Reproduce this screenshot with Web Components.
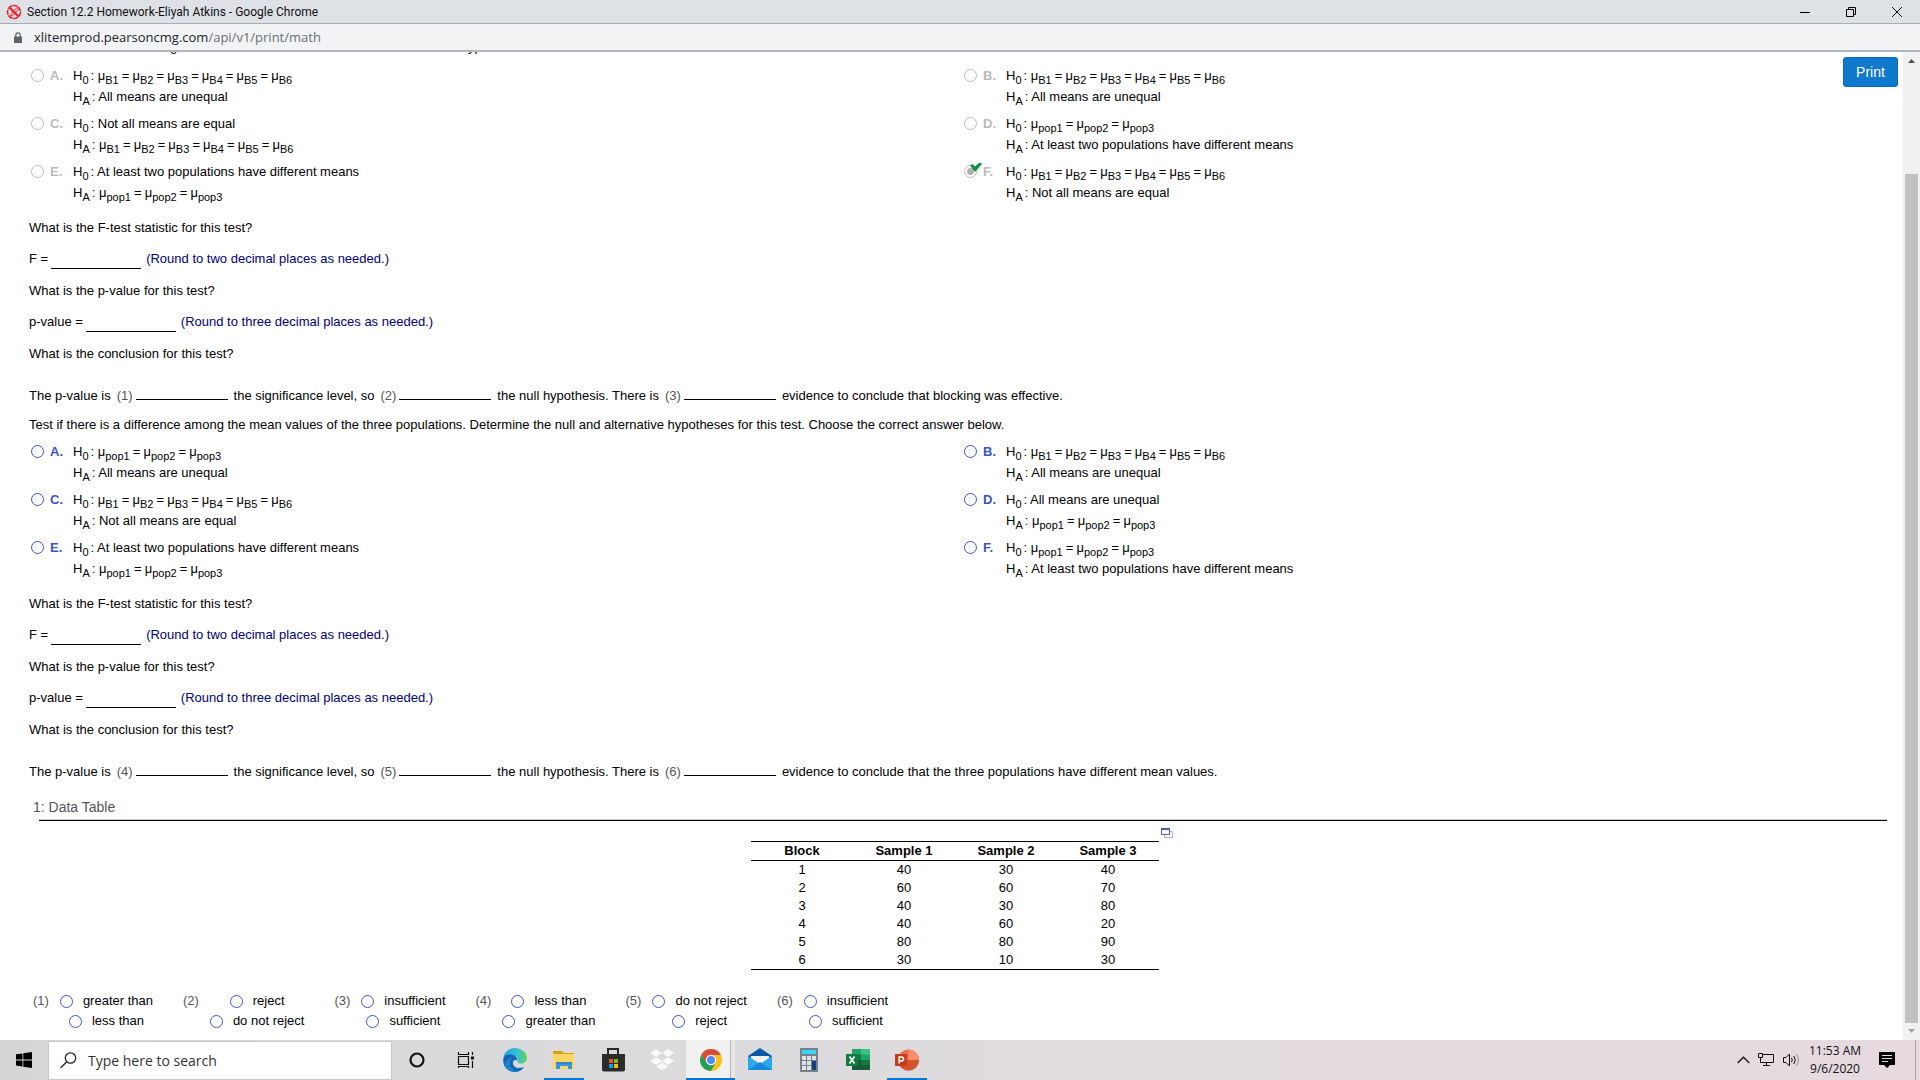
<!DOCTYPE html>
<html lang="en">
<head>
<meta charset="utf-8">
<title>Section 12.2 Homework</title>
<style>
  html, body { height: 100%; }
  body { margin: 0; overflow: hidden; background: #fff; }
</style>
</head>
<body>
<desktop-screen>
  <window-title slot="top">Section 12.2 Homework-Eliyah Atkins - Google Chrome</window-title>
  <address-bar slot="top" host="xlitemprod.pearsoncmg.com" path="/api/v1/print/math"></address-bar>

  <page-view slot="page">
    <hypothesis-test lead>
      <span slot="prompt">Test to see if this blocking was effective. Determine the null and alternative hypotheses for this test. Choose the correct answer below.</span>
      <answer-choice letter="A" locked><mean-chain slot="null" of="B1 B2 B3 B4 B5 B6"></mean-chain><span slot="alt">All means are unequal</span></answer-choice>
      <answer-choice letter="B" locked><mean-chain slot="null" of="B1 B2 B3 B4 B5 B6"></mean-chain><span slot="alt">All means are unequal</span></answer-choice>
      <answer-choice letter="C" locked><span slot="null">Not all means are equal</span><mean-chain slot="alt" of="B1 B2 B3 B4 B5 B6"></mean-chain></answer-choice>
      <answer-choice letter="D" locked><mean-chain slot="null" of="pop1 pop2 pop3"></mean-chain><span slot="alt">At least two populations have different means</span></answer-choice>
      <answer-choice letter="E" locked><span slot="null">At least two populations have different means</span><mean-chain slot="alt" of="pop1 pop2 pop3"></mean-chain></answer-choice>
      <answer-choice letter="F" locked correct><mean-chain slot="null" of="B1 B2 B3 B4 B5 B6"></mean-chain><span slot="alt">Not all means are equal</span></answer-choice>
      <conclusion-line slot="conclusion" first="1">evidence to conclude that blocking was effective.</conclusion-line>
    </hypothesis-test>

    <hypothesis-test>
      <span slot="prompt">Test if there is a difference among the mean values of the three populations. Determine the null and alternative hypotheses for this test. Choose the correct answer below.</span>
      <answer-choice letter="A"><mean-chain slot="null" of="pop1 pop2 pop3"></mean-chain><span slot="alt">All means are unequal</span></answer-choice>
      <answer-choice letter="B"><mean-chain slot="null" of="B1 B2 B3 B4 B5 B6"></mean-chain><span slot="alt">All means are unequal</span></answer-choice>
      <answer-choice letter="C"><mean-chain slot="null" of="B1 B2 B3 B4 B5 B6"></mean-chain><span slot="alt">Not all means are equal</span></answer-choice>
      <answer-choice letter="D"><span slot="null">All means are unequal</span><mean-chain slot="alt" of="pop1 pop2 pop3"></mean-chain></answer-choice>
      <answer-choice letter="E"><span slot="null">At least two populations have different means</span><mean-chain slot="alt" of="pop1 pop2 pop3"></mean-chain></answer-choice>
      <answer-choice letter="F"><mean-chain slot="null" of="pop1 pop2 pop3"></mean-chain><span slot="alt">At least two populations have different means</span></answer-choice>
      <conclusion-line slot="conclusion" first="4">evidence to conclude that the three populations have different mean values.</conclusion-line>
    </hypothesis-test>

    <data-table heading="1: Data Table"></data-table>

    <option-lists>
      <option-list number="1" options="greater than|less than"></option-list>
      <option-list number="2" options="reject|do not reject"></option-list>
      <option-list number="3" options="insufficient|sufficient"></option-list>
      <option-list number="4" options="less than|greater than"></option-list>
      <option-list number="5" options="do not reject|reject"></option-list>
      <option-list number="6" options="insufficient|sufficient"></option-list>
    </option-lists>
  </page-view>

  <task-bar slot="bottom"></task-bar>
</desktop-screen>

<script>
const radioStyle = `
  input[type=radio] {
    appearance: none; box-sizing: border-box; flex: none;
    width: 13px; height: 13px; margin: 0;
    border: 1px solid #3b55c8; border-radius: 50%; background: #fff;
  }`;

function define(name, render) {
  customElements.define(name, class extends HTMLElement {
    constructor() {
      super();
      this.attachShadow({ mode: 'open' });
    }
    connectedCallback() {
      this.shadowRoot.innerHTML = render(this);
    }
  });
}

define('desktop-screen', () => `
  <style>
    :host { display: flex; flex-direction: column; height: 100vh; overflow: hidden; }
    main { flex: 1; min-height: 0; display: flex; }
    main ::slotted(*) { flex: 1; }
  </style>
  <slot name="top"></slot>
  <main><slot name="page"></slot></main>
  <slot name="bottom"></slot>`);

define('window-title', () => `
  <style>
    :host { display: flex; align-items: center; height: 23px; padding-left: 6px; background: #dee1e6;
      border-bottom: 1px solid #a9abaf; font: 12px/16px Roboto, "Noto Sans", sans-serif; color: #111; }
    .icon { flex: none; margin-right: 5px; }
    span { flex: 1; }
    button { width: 46px; height: 23px; padding: 0; border: 0; background: none; display: flex; align-items: center; justify-content: center; }
  </style>
  <svg class="icon" width="16" height="16" viewBox="0 0 16 16" fill="none">
    <circle cx="8" cy="8" r="6.5" stroke="#e8222a" stroke-width="1.6" stroke-dasharray="5 .7"/>
    <path d="M4 12.500 5.500 9.500 11 3.500 13 5 7.500 11z" fill="#f7b9b9" stroke="#e8222a" stroke-width=".8"/>
    <path d="M3.500 3.500 12.500 12.500" stroke="#e8222a" stroke-width="2.200"/>
  </svg>
  <span><slot></slot></span>
  <button aria-label="Minimize"><svg width="10" height="10"><path d="M0 5.500H10" stroke="#000"/></svg></button>
  <button aria-label="Restore"><svg width="10" height="10" fill="none" stroke="#000"><path d="M.5 2.500h7v7h-7zM2.500 2.500v-2h7v7h-2"/></svg></button>
  <button aria-label="Close"><svg width="10" height="10" stroke="#111"><path d="M0 0 10 10M10 0 0 10"/></svg></button>`);

define('address-bar', el => `
  <style>
    :host { display: flex; align-items: center; height: 26px; padding-left: 14px; background: #f1f3f4;
      border-bottom: 2px solid #b4b6b9; font: 13px/20px "Open Sans", "Noto Sans", sans-serif; color: #6c7074; }
    svg { margin-right: 12px; }
    b { font-weight: normal; color: #222529; }
  </style>
  <svg width="8" height="11" viewBox="0 0 8 11"><path d="M0 4.500h8V11H0z" fill="#5f6368"/><path d="M1.800 5V3a2.200 2.200 0 0 1 4.400 0v2" fill="none" stroke="#5f6368" stroke-width="1.200"/></svg>
  <div><b>${el.getAttribute('host')}</b>${el.getAttribute('path')}</div>`);

define('page-view', () => `
  <style>
    :host { display: flex; min-width: 0; background: #fff; position: relative; overflow: hidden;
      font: 13px/16px "Liberation Sans", Arial, sans-serif; color: #000; }
    article { flex: 1; min-width: 0; margin-top: -13px; padding: 0 8px 0 29px; display: flex; flex-direction: column; gap: 13px; }
    .print { position: absolute; top: 5px; right: 22px; width: 55px; height: 30px; padding: 0;
      border: 1px solid #0c67ae; border-radius: 3px; background: #0f79cd; color: #fff;
      font: 14px/20px "Liberation Sans", Arial, sans-serif; }
  </style>
  <article><slot></slot></article>
  <button class="print">Print</button>
  <scroll-rail></scroll-rail>`);

define('scroll-rail', () => `
  <style>
    :host { flex: none; width: 17px; background: #f1f1f1; display: flex; flex-direction: column; }
    svg { flex: none; display: block; }
    .above { flex: 105; }
    .thumb { flex: 849; margin: 0 2px; background: #c1c1c1; }
  </style>
  <svg width="17" height="17"><path d="M5 11h7L8.500 7z" fill="#505050"/></svg>
  <div class="above"></div><div class="thumb"></div>
  <svg width="17" height="17"><path d="M5 6h7L8.500 10z" fill="#a3a3a3"/></svg>`);

define('hypothesis-test', () => `
  <style>
    :host { display: block; }
    p { margin: 0; white-space: nowrap; }
    .choices { display: grid; grid-template-columns: 1fr 1fr; grid-auto-rows: 48px; margin: 8px 0 11px; }
    :host([lead]) .choices { margin-top: 10px; }
    .questions { display: grid; gap: 16px; margin-bottom: 26px; }
    .qa { display: grid; gap: 15px; }
  </style>
  <p><slot name="prompt"></slot></p>
  <div class="choices"><slot></slot></div>
  <div class="questions">
    <div class="qa"><p>What is the F-test statistic for this test?</p><number-blank label="F =" places="two"></number-blank></div>
    <div class="qa"><p>What is the p-value for this test?</p><number-blank label="p-value =" places="three"></number-blank></div>
    <p>What is the conclusion for this test?</p>
  </div>
  <slot name="conclusion"></slot>`);

define('answer-choice', el => {
  const letter = el.getAttribute('letter');
  const correct = el.hasAttribute('correct');
  return `
  <style>
    ${radioStyle}
    :host { display: flex; align-items: flex-start; padding-left: 2px; --ink: #3b55c8; line-height: 21px; }
    :host([locked]) { --ink: #bababa; }
    label { display: flex; align-items: center; width: 42px; color: var(--ink); gap: 6px; position: relative; }
    input[type=radio] { border-color: var(--ink); }
    input[type=radio]:checked { background: radial-gradient(circle, #b0b0b0 0 3px, #fff 4px); }
    .tick { position: absolute; left: 6px; top: 2px; }
    .line { white-space: nowrap; height: 21px; }
    sub { font-size: 11px; line-height: 0; vertical-align: -4px; }
    i { font-style: normal; margin-right: 2px; }
  </style>
  <label><input type="radio" name="choice" ${el.hasAttribute('locked') ? 'disabled' : ''} ${correct ? 'checked' : ''}><b>${letter}.</b>
    ${correct ? '<svg class="tick" width="12" height="9" viewBox="0 0 12 9"><path d="M0 2.500 2.500 1 5 3.500 9 0H11.500V1.500L5 9z" fill="#0a9440"/></svg>' : ''}
  </label>
  <div>
    <div class="line">H<sub>0</sub><i></i>: <slot name="null"></slot></div>
    <div class="line">H<sub>A</sub><i></i>: <slot name="alt"></slot></div>
  </div>`;
});

define('mean-chain', el => `
  <style>
    :host { display: inline; }
    sub { font-size: 11px; line-height: 0; vertical-align: -4px; }
    small { font-size: 11px; line-height: 0; }
  </style>${el.getAttribute('of').split(' ').map(t => `μ<sub>${t}</sub>`).join('<small> </small>=<small> </small>')}`);

define('number-blank', el => `
  <style>
    :host { display: block; }
    label { display: flex; height: 16px; white-space: pre; }
    input { flex: none; box-sizing: border-box; width: 90px; height: 18px; margin: 0 5px 0 3px; padding: 0; border: 0; border-bottom: 1px solid #000; background: none; font: inherit; }
    em { font-style: normal; color: #00007c; }
  </style>
  <label><span>${el.getAttribute('label')}</span><input type="text"><em>(Round to ${el.getAttribute('places')} decimal places as needed.)</em></label>`);

define('conclusion-line', el => {
  const n = Number(el.getAttribute('first'));
  const blank = k => `<label><span>(${k})</span><input type="text"></label>`;
  return `
  <style>
    :host { display: flex; height: 16px; white-space: nowrap; }
    label { display: flex; gap: 3px; margin: 0 6px 0 6px; color: #555; }
    input { flex: none; box-sizing: border-box; width: 92px; height: 12px; margin: 0; padding: 0; border: 0; border-bottom: 1px solid #000; background: none; font: inherit; }
  </style>
  <span>The p-value is</span>${blank(n)}<span>the significance level, so</span>${blank(n + 1)}<span>the null hypothesis. There is</span>${blank(n + 2)}<span><slot></slot></span>`;
});

define('data-table', el => {
  const rows = [[1, 40, 30, 40], [2, 60, 60, 70], [3, 40, 30, 80], [4, 40, 60, 20], [5, 80, 80, 90], [6, 30, 10, 30]];
  return `
  <style>
    :host { display: block; padding-top: 6px; }
    h2 { margin: 0 0 4px 4px; font-size: 14px; line-height: 16px; font-weight: normal; color: #555; }
    hr { margin: 0 8px 0 10px; border: 0; border-top: 1px solid #ccc; border-bottom: 1px solid #000; }
    .holder { display: flex; justify-content: center; align-items: flex-start; gap: 2px; padding: 7px 0 8px; }
    table { width: 408px; margin-top: 13px; table-layout: fixed; border-collapse: separate; border-spacing: 0;
      border-top: 1px solid #000; border-bottom: 1px solid #000; text-align: center; }
    th, td { padding: 0; height: 18px; line-height: 18px; }
    th { border-bottom: 1px solid #000; }
    button { border: 0; padding: 0; background: none; display: block; height: 10px; }
    svg { display: block; }
  </style>
  <h2>${el.getAttribute('heading')}</h2>
  <hr>
  <div class="holder">
    <table>
      <thead><tr><th>Block</th><th>Sample 1</th><th>Sample 2</th><th>Sample 3</th></tr></thead>
      <tbody>${rows.map(r => `<tr>${r.map(c => `<td>${c}</td>`).join('')}</tr>`).join('')}</tbody>
    </table>
    <button aria-label="Open table in a window"><svg width="12" height="10"><path d="M3.500 3.500h8v6h-8z" fill="#fff" stroke="#a9b2dc"/><path d="M.5 .5h8v6h-8z" fill="#fff" stroke="#4a5aa8"/><path d="M0 0h9v2H0z" fill="#4a5aa8"/></svg></button>
  </div>`;
});

define('option-lists', () => `
  <style>:host { display: flex; gap: 30px; padding-left: 4px; line-height: 20px; }</style>
  <slot></slot>`);

define('option-list', el => `
  <style>
    ${radioStyle}
    :host { display: flex; gap: 11px; white-space: nowrap; }
    .number { color: #555; }
    .options { display: flex; flex-direction: column; align-items: center; }
    label { display: flex; align-items: center; gap: 10px; }
  </style>
  <span class="number">(${el.getAttribute('number')})</span>
  <div class="options">${el.getAttribute('options').split('|').map(o => `<label><input type="radio" name="o">${o}</label>`).join('')}</div>`);

const glyphs = {
  cortana: '<circle cx="12" cy="12" r="6.500" fill="none" stroke="#111" stroke-width="2.200"/>',
  taskview: '<path d="M4.500 8.500h10v8h-10zM4.500 4v2.500h10V4M4.500 20v-1.500h10V20" fill="none" stroke="#111" stroke-width="1.200"/><path d="M18.500 4v3M18.500 13v7" stroke="#111" stroke-width="1.200"/><path d="M17 8.500h3v3h-3z" fill="#111"/>',
  edge: '<defs><linearGradient id="a" x1="0" x2="1"><stop offset="0" stop-color="#1f9de0"/><stop offset=".6" stop-color="#35c1d6"/><stop offset="1" stop-color="#62d848"/></linearGradient></defs><path d="M.5 10C1 4 6 0 12 0s12 4.500 12 9.500c0 4-3 6-6 6-2.500 0-4-1-3.500-2.200C16 11 14.500 8 11 8c-4 0-6.500 3-7 6z" fill="url(#a)"/><path d="M.3 11C1 7.500 4.500 6 8 6.500c4 .5 7 3.500 6.500 6-3-1.500-5 .5-4.500 3 .6 4 5 6 11 3.500-2 3.500-5.500 5-9 5C5 24-.5 18.500.3 11z" fill="#1566b4"/><path d="M10 9.500C7 11 6 15 7.500 18.500S13 23.800 14 23.800C9 24.500 3.500 22 1.500 17.500 3 12 6 9.500 10 9.500z" fill="#1b84d2"/>',
  folder: '<path d="M1 3h9l2 2h10v4H1z" fill="#d9a00d"/><path d="M1 6h21v15H1z" fill="#ffd566"/><path d="M4 21v-7h16v7h-4v-3H8v3z" fill="#3a96dd"/><path d="M4 14h16v2H4z" fill="#2f87cc"/>',
  store: '<path d="M7 6V1h10v5" fill="none" stroke="#2b2b2b" stroke-width="2"/><path d="M1 6h23v15.500a2 2 0 0 1-2 2H3a2 2 0 0 1-2-2z" fill="#2b2b2b"/><path d="M8 11h4v4H8z" fill="#f25022"/><path d="M13 11h4v4h-4z" fill="#7fba00"/><path d="M8 16h4v4H8z" fill="#00a4ef"/><path d="M13 16h4v4h-4z" fill="#ffb900"/>',
  dropbox: '<path d="M6 1l6 4-6 4-6-4zM18 1l6 4-6 4-6-4zM6 9l6 4-6 4-6-4zM18 9l6 4-6 4-6-4zM12 14.500l6 4-6 4-6-4z" fill="#fafafa"/>',
  chrome: '<circle cx="12" cy="12" r="11" fill="#fbc116"/><path d="M2.500 6.500A11 11 0 0 0 12 23l4.700-8.500L7.300 14.500z" fill="#1da05a"/><path d="M2.500 6.500 7.300 14.700 12 7h9.700A11 11 0 0 0 2.500 6.500z" fill="#dd4b3e"/><circle cx="12" cy="12" r="5.200" fill="#fff"/><circle cx="12" cy="12" r="4" fill="#4c8bf5"/>',
  mail: '<path d="M0 8 12 0l12 8v14H0z" fill="#0a5aa8"/><path d="M3 8h18v9H3z" fill="#f3f3f3"/><path d="M0 8l12 8 12-8v14H0z" fill="#2aa9ec"/><path d="M0 22 12 14l12 8z" fill="#1688dc"/>',
  calc: '<rect x="3" y="0" width="18" height="24" rx="1" fill="#76818c"/><path d="M5 2h14v4H5z" fill="#3ad7f5"/><path d="M5 8h4v4H5zM10 8h4v4h-4zM15 8h4v4h-4zM5 13h4v4H5zM10 13h4v4h-4zM5 18h4v4H5zM10 18h4v4h-4z" fill="#dfe3e7"/><path d="M15 13h4v9h-4z" fill="#14427c"/>',
  excel: '<path d="M6 1h18v21H6z" fill="#21a366"/><path d="M15 1h9v5.500h-9z" fill="#33c481"/><path d="M6 6.500h9V12H6z" fill="#107c41"/><path d="M6 12h18v10H6z" fill="#185c37"/><path d="M15 12h9v5h-9z" fill="#107c41"/><path d="M0 6h12v12H0z" fill="#107c41"/><path d="M3.500 8.500 8.500 15.500M8.500 8.500 3.500 15.500" stroke="#fff" stroke-width="1.700"/>',
  powerpoint: '<circle cx="13.500" cy="12" r="10.500" fill="#ed6c47"/><path d="M13.500 1.500A10.500 10.500 0 0 1 24 12H13.500z" fill="#ff8f6b"/><path d="M3 12h21a10.500 10.500 0 0 1-21 0z" fill="#d35230"/><path d="M0 6h12v12H0z" fill="#c43e1c"/><path d="M4.200 15.500v-6.500h2.300a2 2 0 0 1 0 4H4.200" fill="none" stroke="#fff" stroke-width="1.600"/>'
};

define('app-button', el => `
  <style>
    :host { display: flex; flex: none; width: 49px; justify-content: center; }
    button { width: 40px; height: 40px; box-sizing: border-box; border: 0; padding: 0; background: none; display: flex; align-items: center; justify-content: center; }
    :host([open]) button { border-bottom: 2px solid #0078d7; padding-top: 2px; }
    :host([active]) button { width: 49px; background: linear-gradient(to right, #f1f1f2 44px, #b5b5b5 44px 45px, #e7e7e8 45px); }
  </style>
  <button aria-label="${el.getAttribute('app')}"><svg width="24" height="24" viewBox="0 0 24 24">${glyphs[el.getAttribute('app')]}</svg></button>`);

define('task-bar', () => `
  <style>
    :host { display: flex; align-items: center; height: 40px; background: linear-gradient(to right, #d6d6d7, #dcdbdd 40%, #e2dade 70%, #e6dae0);
      font: 12px/18px "Open Sans", "Noto Sans", sans-serif; color: #111; }
    button { flex: none; padding: 0; border: 0; background: none; font: inherit; color: inherit; display: block; }
    .start { width: 48px; height: 40px; display: flex; align-items: center; justify-content: center; }
    .search { box-sizing: border-box; width: 344px; height: 39px; align-self: flex-end; display: flex; align-items: center; gap: 11px; padding-left: 11px; background: #fff; border: 1px solid #c8c8c8; }
    .search input { flex: 1; min-width: 0; border: 0; padding: 0; background: none; font: 14px/20px "Open Sans", "Noto Sans", sans-serif; }
    .search input::placeholder { color: #333; opacity: 1; }
    .apps { display: flex; flex: 1; }
    .tray { display: flex; align-items: center; gap: 8px; }
    .clock { width: 54px; text-align: center; }
    .note { margin: 0 20px 0 9px; }
    .peek { width: 4px; height: 40px; border-left: 1px solid #aaa0a5; }
    svg { display: block; }
  </style>
  <button class="start" aria-label="Start"><svg width="16" height="16"><path d="M0 2.300 6.500 1.400V7.500H0zM7.300 1.300 16 0v7.500H7.300zM0 8.400h6.500v6.100L0 13.600zM7.300 8.400H16V16L7.300 14.700z" fill="#000"/></svg></button>
  <label class="search">
    <svg width="17" height="17" fill="none" stroke="#222" stroke-width="1.300"><circle cx="10.500" cy="6" r="5.200"/><path d="M6.800 9.700.5 16"/></svg>
    <input type="text" placeholder="Type here to search">
  </label>
  <div class="apps">
    <app-button app="cortana"></app-button><app-button app="taskview"></app-button><app-button app="edge"></app-button>
    <app-button app="folder" open></app-button><app-button app="store"></app-button><app-button app="dropbox"></app-button>
    <app-button app="chrome" open active></app-button><app-button app="mail"></app-button><app-button app="calc"></app-button>
    <app-button app="excel"></app-button><app-button app="powerpoint" open></app-button>
  </div>
  <div class="tray">
    <button aria-label="Show hidden icons"><svg width="13" height="8" fill="none" stroke="#111" stroke-width="1.300"><path d="M.7 7 6.500 1.200 12.300 7"/></svg></button>
    <button aria-label="Network"><svg width="17" height="14" fill="none" stroke="#111"><path d="M4.500 1.500h11v8h-13V6M8.500 9.500v3M5 12.500h7"/><path d="M.5 .5h4v4h-4zM2.500 4.500v2"/></svg></button>
    <button aria-label="Volume"><svg width="17" height="14" fill="none" stroke="#111"><path d="M.5 4.500h2.500L6.500 1v12L3 9.500H.5z"/><path d="M8.500 4.800q1.500 2.200 0 4.400M10.800 3q3 4 0 8"/><path d="M13.200 1q4.500 6 0 12" stroke="#999"/></svg></button>
    <div class="clock">11:53 AM<br>9/6/2020</div>
    <button class="note" aria-label="Notifications"><svg width="16" height="16"><path d="M0 0h16v13h-5l-3 3-3-3H0z" fill="#000"/><path d="M3 3.500h10M3 6.500h10M3 9.500h6" stroke="#e6dae0"/></svg></button>
  </div>
  <div class="peek"></div>`);
</script>
</body>
</html>
